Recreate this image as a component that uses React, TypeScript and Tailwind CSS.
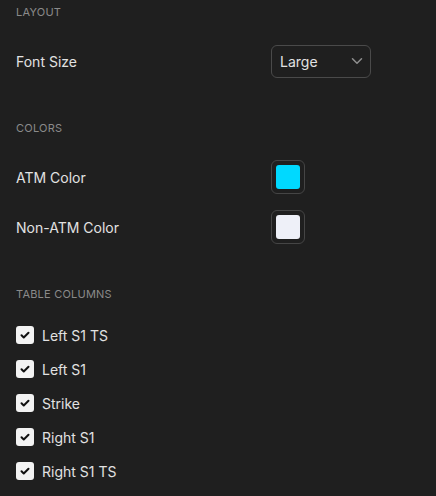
import React from "react";

const Check = () => (
  <svg width="12" height="12" viewBox="0 0 24 24" fill="none" stroke="#111111" strokeWidth="4" strokeLinecap="round" strokeLinejoin="round">
    <path d="M5 12.5l4.5 4.5L19 7.5" />
  </svg>
);

const Header = ({ children }: { children: React.ReactNode }) => (
  <div className="h-4 flex items-center text-[11px] leading-4 uppercase tracking-[0.02em] text-[#8a8a8a]">{children}</div>
);

const Row = ({ label, children }: { label: string; children: React.ReactNode }) => (
  <div className="h-[50px] flex items-center">
    <div className="w-[255px] text-[14px] text-[#e2e2e2]">{label}</div>
    {children}
  </div>
);

const Swatch = ({ color }: { color: string }) => (
  <div className="w-[34px] h-[34px] rounded-md border border-[#454545] bg-[#1f1f1f] flex items-center justify-center">
    <div className="w-6 h-6 rounded-[3px]" style={{ backgroundColor: color }} />
  </div>
);

export default function App() {
  const cols = ["Left S1 TS", "Left S1", "Strike", "Right S1", "Right S1 TS"];
  return (
    <div
      className="w-[436px] h-[496px] bg-[#1f1f1f] px-4 pt-1 overflow-hidden"
      style={{ fontFamily: "Inter, 'Noto Sans', sans-serif" }}
    >
      <Header>Layout</Header>
      <div className="mt-[16px]">
        <Row label="Font Size">
          <div className="w-[100px] h-[33px] rounded-md border border-[#4a4a4a] flex items-center justify-between pl-[8px] pr-[4px] text-[14px] text-[#e2e2e2]">
            <span>Large</span>
            <svg width="18" height="18" viewBox="0 0 24 24" fill="none" stroke="#8f8f8f" strokeWidth="2" strokeLinecap="round" strokeLinejoin="round">
              <path d="M6 9l6 6 6-6" />
            </svg>
          </div>
        </Row>
      </div>
      <div className="mt-[34px]">
        <Header>Colors</Header>
      </div>
      <div className="mt-[16px]">
        <Row label="ATM Color">
          <Swatch color="#00d9ff" />
        </Row>
        <Row label="Non-ATM Color">
          <Swatch color="#eef0f8" />
        </Row>
      </div>
      <div className="mt-[34px]">
        <Header>Table Columns</Header>
      </div>
      <div className="mt-4 flex flex-col">
        {cols.map((c) => (
          <div key={c} className="h-[34px] flex items-center gap-2">
            <div className="w-[18px] h-[18px] rounded-[3px] bg-[#f3f3f3] flex items-center justify-center">
              <Check />
            </div>
            <span className="text-[14px] text-[#e2e2e2]">{c}</span>
          </div>
        ))}
      </div>
    </div>
  );
}
